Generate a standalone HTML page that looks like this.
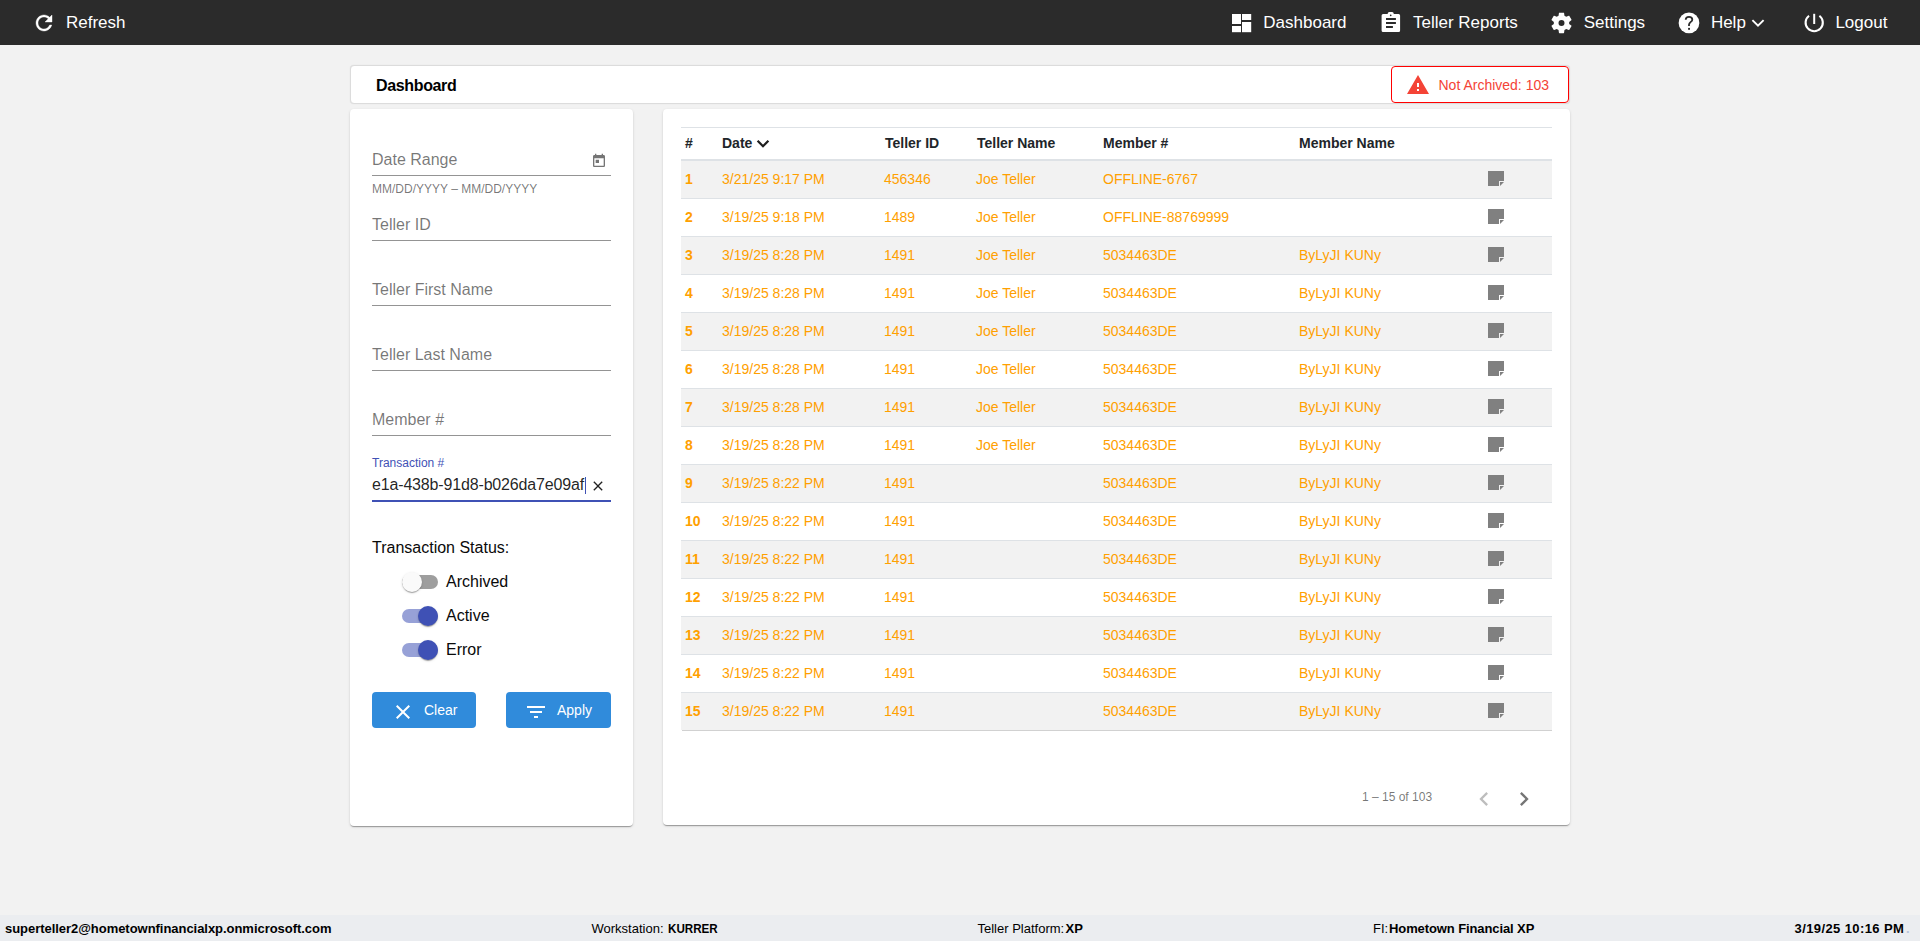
<!DOCTYPE html>
<html><head><meta charset="utf-8"><title>Dashboard</title>
<style>
html,body{margin:0;padding:0;width:1920px;height:941px;overflow:hidden;background:#f2f2f2;font-family:'Liberation Sans', sans-serif}
svg{display:block}
</style></head><body>
<div style="position:absolute;left:0;top:0;width:1920px;height:45px;background:#2b2b2b"></div>
<svg style="position:absolute;left:0;top:0" width="1920" height="45" viewBox="0 0 1920 45"><g transform="translate(32 11)"><path fill="#fff" stroke="#fff" stroke-width="0.4" d="M17.65 6.35C16.2 4.9 14.21 4 12 4c-4.42 0-7.99 3.58-7.99 8s3.57 8 7.99 8c3.73 0 6.84-2.55 7.73-6h-2.08c-.82 2.33-3.04 4-5.65 4-3.31 0-6-2.69-6-6s2.69-6 6-6c1.66 0 3.14.69 4.22 1.78L13 11h7V4l-2.35 2.35z"/></g><g fill="#fff"><rect x="1232" y="14" width="9" height="10"/><rect x="1232" y="26" width="9" height="6.2"/><rect x="1242" y="14" width="9.2" height="6"/><rect x="1242" y="22" width="9.2" height="10.2"/></g><path fill="#fff" d="M1383.1 14H1387.7V13.5A1.6 1.6 0 0 1 1389.3 11.9H1392.1A1.6 1.6 0 0 1 1393.7 13.5V14H1398.6A1.5 1.5 0 0 1 1400.1 15.5V30.5A1.5 1.5 0 0 1 1398.6 32H1383.1A1.5 1.5 0 0 1 1381.6 30.5V15.5A1.5 1.5 0 0 1 1383.1 14Z"/><g fill="#2b2b2b"><circle cx="1390.7" cy="15.3" r="0.85"/><rect x="1386" y="18" width="9.9" height="2"/><rect x="1386" y="22" width="9.9" height="2"/><rect x="1386" y="26" width="6.9" height="2"/></g><g transform="translate(1561.5 22.9) scale(1.07) translate(-12 -12)"><path fill="#fff" fill-rule="evenodd" d="M19.14 12.94c.04-.3.06-.61.06-.94 0-.32-.02-.64-.07-.94l2.03-1.58c.18-.14.23-.41.12-.61l-1.92-3.32c-.12-.22-.37-.29-.59-.22l-2.39.96c-.5-.38-1.03-.7-1.62-.94l-.36-2.54c-.04-.24-.24-.41-.48-.41h-3.84c-.24 0-.43.17-.47.41l-.36 2.54c-.59.24-1.13.57-1.62.94l-2.39-.96c-.22-.08-.47 0-.59.22L2.74 8.87c-.12.21-.08.47.12.61l2.03 1.58c-.05.3-.09.63-.09.94s.02.64.07.94l-2.03 1.58c-.18.14-.23.41-.12.61l1.92 3.32c.12.22.37.29.59.22l2.39-.96c.5.38 1.03.7 1.62.94l.36 2.54c.05.24.24.41.48.41h3.84c.24 0 .44-.17.47-.41l.36-2.54c.59-.24 1.13-.56 1.62-.94l2.39.96c.22.08.47 0 .59-.22l1.92-3.32c.12-.22.07-.47-.12-.61l-2.01-1.58zM12 14.8a2.8 2.8 0 1 1 0-5.6a2.8 2.8 0 1 1 0 5.6z"/></g><circle cx="1689" cy="22.9" r="10.35" fill="#fff"/><path fill="none" stroke="#2b2b2b" stroke-width="1.8" d="M1685.7 19.8C1685.7 17.9 1687.2 16.9 1689 16.9C1690.9 16.9 1692.3 18 1692.3 19.7C1692.3 21.7 1689 22.2 1689 24.7V25.9"/><rect x="1688.1" y="27.9" width="1.9" height="1.9" fill="#2b2b2b"/><path fill="none" stroke="#fff" stroke-width="1.9" d="M1752.4 20.1L1758 25.7L1763.6 20.1"/><path fill="none" stroke="#fff" stroke-width="2.1" d="M1809.02 15.73A8.6 8.6 0 1 0 1819.38 15.73"/><rect x="1813.2" y="13.8" width="2" height="10.2" fill="#fff"/></svg>
<div style="position:absolute;left:66px;top:13.00px;font-size:17px;line-height:19.533px;color:#fff;font-weight:400;white-space:nowrap;font-family:'Liberation Sans', sans-serif">Refresh</div>
<div style="position:absolute;left:1263.3px;top:13.00px;font-size:17px;line-height:19.533px;color:#fff;font-weight:400;white-space:nowrap;font-family:'Liberation Sans', sans-serif">Dashboard</div>
<div style="position:absolute;left:1413px;top:13.00px;font-size:17px;line-height:19.533px;color:#fff;font-weight:400;white-space:nowrap;font-family:'Liberation Sans', sans-serif">Teller Reports</div>
<div style="position:absolute;left:1583.7px;top:13.00px;font-size:17px;line-height:19.533px;color:#fff;font-weight:400;white-space:nowrap;font-family:'Liberation Sans', sans-serif">Settings</div>
<div style="position:absolute;left:1710.9px;top:13.00px;font-size:17px;line-height:19.533px;color:#fff;font-weight:400;white-space:nowrap;font-family:'Liberation Sans', sans-serif">Help</div>
<div style="position:absolute;left:1835.4px;top:13.00px;font-size:17px;line-height:19.533px;color:#fff;font-weight:400;white-space:nowrap;font-family:'Liberation Sans', sans-serif">Logout</div>
<div style="position:absolute;left:350px;top:65px;width:1220px;height:39px;background:#fff;border:1px solid #dcdcdc;border-radius:4px;box-sizing:border-box;box-shadow:0 0 1px rgba(0,0,0,.12)"></div>
<div style="position:absolute;left:376px;top:77.00px;font-size:16px;line-height:18.384px;color:#000;font-weight:700;white-space:nowrap;font-family:'Liberation Sans', sans-serif;letter-spacing:-0.35px">Dashboard</div>
<div style="position:absolute;left:1391px;top:66px;width:178px;height:37px;background:#fff;border:1px solid #f00;border-radius:4px;box-sizing:border-box"></div>
<svg style="position:absolute;left:1406.1px;top:72.8px;width:24px;height:24px" viewBox="0 0 24 24"><path fill="#f44336" d="M1 21h22L12 2 1 21zm12-3h-2v-2h2v2zm0-4h-2v-4h2v4z"/></svg>
<div style="position:absolute;left:1438.5px;top:77.00px;font-size:14px;line-height:16.086px;color:#f44336;font-weight:400;white-space:nowrap;font-family:'Liberation Sans', sans-serif">Not Archived: 103</div>
<div style="position:absolute;left:350px;top:109px;width:283px;height:717px;background:#fff;border-radius:4px;box-shadow:0 2px 1px -1px rgba(0,0,0,.2),0 1px 1px 0 rgba(0,0,0,.14),0 1px 3px 0 rgba(0,0,0,.12)"></div>
<div style="position:absolute;left:372px;top:150.80px;font-size:16px;line-height:18.384px;color:rgba(0,0,0,.54);font-weight:400;white-space:nowrap;font-family:'Liberation Sans', sans-serif">Date Range</div>
<div style="position:absolute;left:372px;top:175px;width:239px;height:1px;background:rgba(0,0,0,.42)"></div>
<div style="position:absolute;left:372px;top:215.80px;font-size:16px;line-height:18.384px;color:rgba(0,0,0,.54);font-weight:400;white-space:nowrap;font-family:'Liberation Sans', sans-serif">Teller ID</div>
<div style="position:absolute;left:372px;top:240px;width:239px;height:1px;background:rgba(0,0,0,.42)"></div>
<div style="position:absolute;left:372px;top:280.80px;font-size:16px;line-height:18.384px;color:rgba(0,0,0,.54);font-weight:400;white-space:nowrap;font-family:'Liberation Sans', sans-serif">Teller First Name</div>
<div style="position:absolute;left:372px;top:305px;width:239px;height:1px;background:rgba(0,0,0,.42)"></div>
<div style="position:absolute;left:372px;top:345.80px;font-size:16px;line-height:18.384px;color:rgba(0,0,0,.54);font-weight:400;white-space:nowrap;font-family:'Liberation Sans', sans-serif">Teller Last Name</div>
<div style="position:absolute;left:372px;top:370px;width:239px;height:1px;background:rgba(0,0,0,.42)"></div>
<div style="position:absolute;left:372px;top:410.80px;font-size:16px;line-height:18.384px;color:rgba(0,0,0,.54);font-weight:400;white-space:nowrap;font-family:'Liberation Sans', sans-serif">Member #</div>
<div style="position:absolute;left:372px;top:435px;width:239px;height:1px;background:rgba(0,0,0,.42)"></div>
<svg style="position:absolute;left:590.9px;top:152.8px;width:16px;height:16px" viewBox="0 0 24 24"><path fill="rgba(0,0,0,.54)" d="M19 3h-1V1h-2v2H8V1H6v2H5c-1.11 0-1.99.9-1.99 2L3 19c0 1.1.89 2 2 2h14c1.1 0 2-.9 2-2V5c0-1.1-.9-2-2-2zm0 16H5V8h14v11zM7 10h5v5H7z"/></svg>
<div style="position:absolute;left:372px;top:182.80px;font-size:12px;line-height:13.788px;color:rgba(0,0,0,.54);font-weight:400;white-space:nowrap;font-family:'Liberation Sans', sans-serif">MM/DD/YYYY – MM/DD/YYYY</div>
<div style="position:absolute;left:372px;top:456.60px;font-size:12px;line-height:13.788px;color:#3f51b5;font-weight:400;white-space:nowrap;font-family:'Liberation Sans', sans-serif">Transaction #</div>
<div style="position:absolute;left:372px;top:476.00px;font-size:16px;line-height:18.384px;color:rgba(0,0,0,.87);font-weight:400;white-space:nowrap;font-family:'Liberation Sans', sans-serif;letter-spacing:-0.16px">e1a-438b-91d8-b026da7e09af</div>
<div style="position:absolute;left:585px;top:477px;width:1px;height:17px;background:#3f51b5"></div>
<svg style="position:absolute;left:589.8px;top:477.5px;width:16px;height:16px" viewBox="0 0 24 24"><path fill="rgba(0,0,0,.87)" d="M19 6.41L17.59 5 12 10.59 6.41 5 5 6.41 10.59 12 5 17.59 6.41 19 12 13.41 17.59 19 19 17.59 13.41 12z"/></svg>
<div style="position:absolute;left:372px;top:500px;width:239px;height:2px;background:#3f51b5"></div>
<div style="position:absolute;left:372px;top:539.00px;font-size:16px;line-height:18.384px;color:#0a0a0a;font-weight:400;white-space:nowrap;font-family:'Liberation Sans', sans-serif">Transaction Status:</div>
<div style="position:absolute;left:402px;top:575px;width:36px;height:14px;border-radius:7px;background:rgba(0,0,0,.38)"></div>
<div style="position:absolute;left:402px;top:572px;width:20px;height:20px;border-radius:50%;background:#fafafa;box-shadow:0 2px 1px -1px rgba(0,0,0,.2),0 1px 1px 0 rgba(0,0,0,.14),0 1px 3px 0 rgba(0,0,0,.12)"></div>
<div style="position:absolute;left:446px;top:572.50px;font-size:16px;line-height:18.384px;color:#0a0a0a;font-weight:400;white-space:nowrap;font-family:'Liberation Sans', sans-serif">Archived</div>
<div style="position:absolute;left:402px;top:609px;width:36px;height:14px;border-radius:7px;background:rgba(63,81,181,.54)"></div>
<div style="position:absolute;left:418px;top:606px;width:20px;height:20px;border-radius:50%;background:#3f51b5;box-shadow:0 2px 1px -1px rgba(0,0,0,.2),0 1px 1px 0 rgba(0,0,0,.14),0 1px 3px 0 rgba(0,0,0,.12)"></div>
<div style="position:absolute;left:446px;top:606.50px;font-size:16px;line-height:18.384px;color:#0a0a0a;font-weight:400;white-space:nowrap;font-family:'Liberation Sans', sans-serif">Active</div>
<div style="position:absolute;left:402px;top:643px;width:36px;height:14px;border-radius:7px;background:rgba(63,81,181,.54)"></div>
<div style="position:absolute;left:418px;top:640px;width:20px;height:20px;border-radius:50%;background:#3f51b5;box-shadow:0 2px 1px -1px rgba(0,0,0,.2),0 1px 1px 0 rgba(0,0,0,.14),0 1px 3px 0 rgba(0,0,0,.12)"></div>
<div style="position:absolute;left:446px;top:640.50px;font-size:16px;line-height:18.384px;color:#0a0a0a;font-weight:400;white-space:nowrap;font-family:'Liberation Sans', sans-serif">Error</div>
<div style="position:absolute;left:372px;top:692px;width:104px;height:36px;background:#308bdb;border-radius:4px"></div>
<svg style="position:absolute;left:390.5px;top:700px;width:24px;height:24px" viewBox="0 0 24 24"><path fill="#fff" d="M19 6.41L17.59 5 12 10.59 6.41 5 5 6.41 10.59 12 5 17.59 6.41 19 12 13.41 17.59 19 19 17.59 13.41 12z"/></svg>
<div style="position:absolute;left:424px;top:702.00px;font-size:14px;line-height:16.086px;color:#fff;font-weight:400;white-space:nowrap;font-family:'Liberation Sans', sans-serif">Clear</div>
<div style="position:absolute;left:506px;top:692px;width:105px;height:36px;background:#308bdb;border-radius:4px"></div>
<svg style="position:absolute;left:523.5px;top:700px;width:24px;height:24px" viewBox="0 0 24 24"><path fill="#fff" d="M10 18h4v-2h-4v2zM3 6v2h18V6H3zm3 7h12v-2H6v2z"/></svg>
<div style="position:absolute;left:557px;top:702.00px;font-size:14px;line-height:16.086px;color:#fff;font-weight:400;white-space:nowrap;font-family:'Liberation Sans', sans-serif">Apply</div>
<div style="position:absolute;left:663px;top:109px;width:907px;height:716px;background:#fff;border-radius:4px;box-shadow:0 2px 1px -1px rgba(0,0,0,.2),0 1px 1px 0 rgba(0,0,0,.14),0 1px 3px 0 rgba(0,0,0,.12)"></div>
<div style="position:absolute;left:681px;top:127px;width:871px;height:1px;background:#dee2e6"></div>
<div style="position:absolute;left:681px;top:159px;width:871px;height:2px;background:#dee2e6"></div>
<div style="position:absolute;left:685px;top:135.00px;font-size:14px;line-height:16.086px;color:#212529;font-weight:700;white-space:nowrap;font-family:'Liberation Sans', sans-serif">#</div>
<div style="position:absolute;left:722px;top:135.00px;font-size:14px;line-height:16.086px;color:#212529;font-weight:700;white-space:nowrap;font-family:'Liberation Sans', sans-serif">Date</div>
<div style="position:absolute;left:885px;top:135.00px;font-size:14px;line-height:16.086px;color:#212529;font-weight:700;white-space:nowrap;font-family:'Liberation Sans', sans-serif">Teller ID</div>
<div style="position:absolute;left:977px;top:135.00px;font-size:14px;line-height:16.086px;color:#212529;font-weight:700;white-space:nowrap;font-family:'Liberation Sans', sans-serif">Teller Name</div>
<div style="position:absolute;left:1103px;top:135.00px;font-size:14px;line-height:16.086px;color:#212529;font-weight:700;white-space:nowrap;font-family:'Liberation Sans', sans-serif">Member #</div>
<div style="position:absolute;left:1299px;top:135.00px;font-size:14px;line-height:16.086px;color:#212529;font-weight:700;white-space:nowrap;font-family:'Liberation Sans', sans-serif">Member Name</div>
<svg style="position:absolute;left:750px;top:132px;width:26px;height:22px" viewBox="750 132 26 22"><path fill="none" stroke="#1e1e1e" stroke-width="2.3" d="M757.6 140.8L763 146.2L768.4 140.8"/></svg>
<div style="position:absolute;left:681px;top:161px;width:871px;height:37px;background:#f2f2f2"></div>
<div style="position:absolute;left:681px;top:198px;width:871px;height:1px;background:#dee2e6"></div>
<div style="position:absolute;left:685px;top:171.00px;font-size:14px;line-height:16.086px;color:#ffa000;font-weight:700;white-space:nowrap;font-family:'Liberation Sans', sans-serif">1</div>
<div style="position:absolute;left:722px;top:171.00px;font-size:14px;line-height:16.086px;color:#ffa000;font-weight:400;white-space:nowrap;font-family:'Liberation Sans', sans-serif">3/21/25 9:17 PM</div>
<div style="position:absolute;left:884px;top:171.00px;font-size:14px;line-height:16.086px;color:#ffa000;font-weight:400;white-space:nowrap;font-family:'Liberation Sans', sans-serif">456346</div>
<div style="position:absolute;left:976px;top:171.00px;font-size:14px;line-height:16.086px;color:#ffa000;font-weight:400;white-space:nowrap;font-family:'Liberation Sans', sans-serif">Joe Teller</div>
<div style="position:absolute;left:1103px;top:171.00px;font-size:14px;line-height:16.086px;color:#ffa000;font-weight:400;white-space:nowrap;font-family:'Liberation Sans', sans-serif">OFFLINE-6767</div>
<svg style="position:absolute;left:1488px;top:171px;width:16px;height:15px" viewBox="0 0 16 15"><path fill="#808080" d="M0 0H16V10H11V15H0Z M12 11H16L12 15Z"/></svg>
<div style="position:absolute;left:681px;top:199px;width:871px;height:37px;background:#fff"></div>
<div style="position:absolute;left:681px;top:236px;width:871px;height:1px;background:#dee2e6"></div>
<div style="position:absolute;left:685px;top:209.00px;font-size:14px;line-height:16.086px;color:#ffa000;font-weight:700;white-space:nowrap;font-family:'Liberation Sans', sans-serif">2</div>
<div style="position:absolute;left:722px;top:209.00px;font-size:14px;line-height:16.086px;color:#ffa000;font-weight:400;white-space:nowrap;font-family:'Liberation Sans', sans-serif">3/19/25 9:18 PM</div>
<div style="position:absolute;left:884px;top:209.00px;font-size:14px;line-height:16.086px;color:#ffa000;font-weight:400;white-space:nowrap;font-family:'Liberation Sans', sans-serif">1489</div>
<div style="position:absolute;left:976px;top:209.00px;font-size:14px;line-height:16.086px;color:#ffa000;font-weight:400;white-space:nowrap;font-family:'Liberation Sans', sans-serif">Joe Teller</div>
<div style="position:absolute;left:1103px;top:209.00px;font-size:14px;line-height:16.086px;color:#ffa000;font-weight:400;white-space:nowrap;font-family:'Liberation Sans', sans-serif">OFFLINE-88769999</div>
<svg style="position:absolute;left:1488px;top:209px;width:16px;height:15px" viewBox="0 0 16 15"><path fill="#808080" d="M0 0H16V10H11V15H0Z M12 11H16L12 15Z"/></svg>
<div style="position:absolute;left:681px;top:237px;width:871px;height:37px;background:#f2f2f2"></div>
<div style="position:absolute;left:681px;top:274px;width:871px;height:1px;background:#dee2e6"></div>
<div style="position:absolute;left:685px;top:247.00px;font-size:14px;line-height:16.086px;color:#ffa000;font-weight:700;white-space:nowrap;font-family:'Liberation Sans', sans-serif">3</div>
<div style="position:absolute;left:722px;top:247.00px;font-size:14px;line-height:16.086px;color:#ffa000;font-weight:400;white-space:nowrap;font-family:'Liberation Sans', sans-serif">3/19/25 8:28 PM</div>
<div style="position:absolute;left:884px;top:247.00px;font-size:14px;line-height:16.086px;color:#ffa000;font-weight:400;white-space:nowrap;font-family:'Liberation Sans', sans-serif">1491</div>
<div style="position:absolute;left:976px;top:247.00px;font-size:14px;line-height:16.086px;color:#ffa000;font-weight:400;white-space:nowrap;font-family:'Liberation Sans', sans-serif">Joe Teller</div>
<div style="position:absolute;left:1103px;top:247.00px;font-size:14px;line-height:16.086px;color:#ffa000;font-weight:400;white-space:nowrap;font-family:'Liberation Sans', sans-serif">5034463DE</div>
<div style="position:absolute;left:1299px;top:247.00px;font-size:14px;line-height:16.086px;color:#ffa000;font-weight:400;white-space:nowrap;font-family:'Liberation Sans', sans-serif">ByLyJI KUNy</div>
<svg style="position:absolute;left:1488px;top:247px;width:16px;height:15px" viewBox="0 0 16 15"><path fill="#808080" d="M0 0H16V10H11V15H0Z M12 11H16L12 15Z"/></svg>
<div style="position:absolute;left:681px;top:275px;width:871px;height:37px;background:#fff"></div>
<div style="position:absolute;left:681px;top:312px;width:871px;height:1px;background:#dee2e6"></div>
<div style="position:absolute;left:685px;top:285.00px;font-size:14px;line-height:16.086px;color:#ffa000;font-weight:700;white-space:nowrap;font-family:'Liberation Sans', sans-serif">4</div>
<div style="position:absolute;left:722px;top:285.00px;font-size:14px;line-height:16.086px;color:#ffa000;font-weight:400;white-space:nowrap;font-family:'Liberation Sans', sans-serif">3/19/25 8:28 PM</div>
<div style="position:absolute;left:884px;top:285.00px;font-size:14px;line-height:16.086px;color:#ffa000;font-weight:400;white-space:nowrap;font-family:'Liberation Sans', sans-serif">1491</div>
<div style="position:absolute;left:976px;top:285.00px;font-size:14px;line-height:16.086px;color:#ffa000;font-weight:400;white-space:nowrap;font-family:'Liberation Sans', sans-serif">Joe Teller</div>
<div style="position:absolute;left:1103px;top:285.00px;font-size:14px;line-height:16.086px;color:#ffa000;font-weight:400;white-space:nowrap;font-family:'Liberation Sans', sans-serif">5034463DE</div>
<div style="position:absolute;left:1299px;top:285.00px;font-size:14px;line-height:16.086px;color:#ffa000;font-weight:400;white-space:nowrap;font-family:'Liberation Sans', sans-serif">ByLyJI KUNy</div>
<svg style="position:absolute;left:1488px;top:285px;width:16px;height:15px" viewBox="0 0 16 15"><path fill="#808080" d="M0 0H16V10H11V15H0Z M12 11H16L12 15Z"/></svg>
<div style="position:absolute;left:681px;top:313px;width:871px;height:37px;background:#f2f2f2"></div>
<div style="position:absolute;left:681px;top:350px;width:871px;height:1px;background:#dee2e6"></div>
<div style="position:absolute;left:685px;top:323.00px;font-size:14px;line-height:16.086px;color:#ffa000;font-weight:700;white-space:nowrap;font-family:'Liberation Sans', sans-serif">5</div>
<div style="position:absolute;left:722px;top:323.00px;font-size:14px;line-height:16.086px;color:#ffa000;font-weight:400;white-space:nowrap;font-family:'Liberation Sans', sans-serif">3/19/25 8:28 PM</div>
<div style="position:absolute;left:884px;top:323.00px;font-size:14px;line-height:16.086px;color:#ffa000;font-weight:400;white-space:nowrap;font-family:'Liberation Sans', sans-serif">1491</div>
<div style="position:absolute;left:976px;top:323.00px;font-size:14px;line-height:16.086px;color:#ffa000;font-weight:400;white-space:nowrap;font-family:'Liberation Sans', sans-serif">Joe Teller</div>
<div style="position:absolute;left:1103px;top:323.00px;font-size:14px;line-height:16.086px;color:#ffa000;font-weight:400;white-space:nowrap;font-family:'Liberation Sans', sans-serif">5034463DE</div>
<div style="position:absolute;left:1299px;top:323.00px;font-size:14px;line-height:16.086px;color:#ffa000;font-weight:400;white-space:nowrap;font-family:'Liberation Sans', sans-serif">ByLyJI KUNy</div>
<svg style="position:absolute;left:1488px;top:323px;width:16px;height:15px" viewBox="0 0 16 15"><path fill="#808080" d="M0 0H16V10H11V15H0Z M12 11H16L12 15Z"/></svg>
<div style="position:absolute;left:681px;top:351px;width:871px;height:37px;background:#fff"></div>
<div style="position:absolute;left:681px;top:388px;width:871px;height:1px;background:#dee2e6"></div>
<div style="position:absolute;left:685px;top:361.00px;font-size:14px;line-height:16.086px;color:#ffa000;font-weight:700;white-space:nowrap;font-family:'Liberation Sans', sans-serif">6</div>
<div style="position:absolute;left:722px;top:361.00px;font-size:14px;line-height:16.086px;color:#ffa000;font-weight:400;white-space:nowrap;font-family:'Liberation Sans', sans-serif">3/19/25 8:28 PM</div>
<div style="position:absolute;left:884px;top:361.00px;font-size:14px;line-height:16.086px;color:#ffa000;font-weight:400;white-space:nowrap;font-family:'Liberation Sans', sans-serif">1491</div>
<div style="position:absolute;left:976px;top:361.00px;font-size:14px;line-height:16.086px;color:#ffa000;font-weight:400;white-space:nowrap;font-family:'Liberation Sans', sans-serif">Joe Teller</div>
<div style="position:absolute;left:1103px;top:361.00px;font-size:14px;line-height:16.086px;color:#ffa000;font-weight:400;white-space:nowrap;font-family:'Liberation Sans', sans-serif">5034463DE</div>
<div style="position:absolute;left:1299px;top:361.00px;font-size:14px;line-height:16.086px;color:#ffa000;font-weight:400;white-space:nowrap;font-family:'Liberation Sans', sans-serif">ByLyJI KUNy</div>
<svg style="position:absolute;left:1488px;top:361px;width:16px;height:15px" viewBox="0 0 16 15"><path fill="#808080" d="M0 0H16V10H11V15H0Z M12 11H16L12 15Z"/></svg>
<div style="position:absolute;left:681px;top:389px;width:871px;height:37px;background:#f2f2f2"></div>
<div style="position:absolute;left:681px;top:426px;width:871px;height:1px;background:#dee2e6"></div>
<div style="position:absolute;left:685px;top:399.00px;font-size:14px;line-height:16.086px;color:#ffa000;font-weight:700;white-space:nowrap;font-family:'Liberation Sans', sans-serif">7</div>
<div style="position:absolute;left:722px;top:399.00px;font-size:14px;line-height:16.086px;color:#ffa000;font-weight:400;white-space:nowrap;font-family:'Liberation Sans', sans-serif">3/19/25 8:28 PM</div>
<div style="position:absolute;left:884px;top:399.00px;font-size:14px;line-height:16.086px;color:#ffa000;font-weight:400;white-space:nowrap;font-family:'Liberation Sans', sans-serif">1491</div>
<div style="position:absolute;left:976px;top:399.00px;font-size:14px;line-height:16.086px;color:#ffa000;font-weight:400;white-space:nowrap;font-family:'Liberation Sans', sans-serif">Joe Teller</div>
<div style="position:absolute;left:1103px;top:399.00px;font-size:14px;line-height:16.086px;color:#ffa000;font-weight:400;white-space:nowrap;font-family:'Liberation Sans', sans-serif">5034463DE</div>
<div style="position:absolute;left:1299px;top:399.00px;font-size:14px;line-height:16.086px;color:#ffa000;font-weight:400;white-space:nowrap;font-family:'Liberation Sans', sans-serif">ByLyJI KUNy</div>
<svg style="position:absolute;left:1488px;top:399px;width:16px;height:15px" viewBox="0 0 16 15"><path fill="#808080" d="M0 0H16V10H11V15H0Z M12 11H16L12 15Z"/></svg>
<div style="position:absolute;left:681px;top:427px;width:871px;height:37px;background:#fff"></div>
<div style="position:absolute;left:681px;top:464px;width:871px;height:1px;background:#dee2e6"></div>
<div style="position:absolute;left:685px;top:437.00px;font-size:14px;line-height:16.086px;color:#ffa000;font-weight:700;white-space:nowrap;font-family:'Liberation Sans', sans-serif">8</div>
<div style="position:absolute;left:722px;top:437.00px;font-size:14px;line-height:16.086px;color:#ffa000;font-weight:400;white-space:nowrap;font-family:'Liberation Sans', sans-serif">3/19/25 8:28 PM</div>
<div style="position:absolute;left:884px;top:437.00px;font-size:14px;line-height:16.086px;color:#ffa000;font-weight:400;white-space:nowrap;font-family:'Liberation Sans', sans-serif">1491</div>
<div style="position:absolute;left:976px;top:437.00px;font-size:14px;line-height:16.086px;color:#ffa000;font-weight:400;white-space:nowrap;font-family:'Liberation Sans', sans-serif">Joe Teller</div>
<div style="position:absolute;left:1103px;top:437.00px;font-size:14px;line-height:16.086px;color:#ffa000;font-weight:400;white-space:nowrap;font-family:'Liberation Sans', sans-serif">5034463DE</div>
<div style="position:absolute;left:1299px;top:437.00px;font-size:14px;line-height:16.086px;color:#ffa000;font-weight:400;white-space:nowrap;font-family:'Liberation Sans', sans-serif">ByLyJI KUNy</div>
<svg style="position:absolute;left:1488px;top:437px;width:16px;height:15px" viewBox="0 0 16 15"><path fill="#808080" d="M0 0H16V10H11V15H0Z M12 11H16L12 15Z"/></svg>
<div style="position:absolute;left:681px;top:465px;width:871px;height:37px;background:#f2f2f2"></div>
<div style="position:absolute;left:681px;top:502px;width:871px;height:1px;background:#dee2e6"></div>
<div style="position:absolute;left:685px;top:475.00px;font-size:14px;line-height:16.086px;color:#ffa000;font-weight:700;white-space:nowrap;font-family:'Liberation Sans', sans-serif">9</div>
<div style="position:absolute;left:722px;top:475.00px;font-size:14px;line-height:16.086px;color:#ffa000;font-weight:400;white-space:nowrap;font-family:'Liberation Sans', sans-serif">3/19/25 8:22 PM</div>
<div style="position:absolute;left:884px;top:475.00px;font-size:14px;line-height:16.086px;color:#ffa000;font-weight:400;white-space:nowrap;font-family:'Liberation Sans', sans-serif">1491</div>
<div style="position:absolute;left:1103px;top:475.00px;font-size:14px;line-height:16.086px;color:#ffa000;font-weight:400;white-space:nowrap;font-family:'Liberation Sans', sans-serif">5034463DE</div>
<div style="position:absolute;left:1299px;top:475.00px;font-size:14px;line-height:16.086px;color:#ffa000;font-weight:400;white-space:nowrap;font-family:'Liberation Sans', sans-serif">ByLyJI KUNy</div>
<svg style="position:absolute;left:1488px;top:475px;width:16px;height:15px" viewBox="0 0 16 15"><path fill="#808080" d="M0 0H16V10H11V15H0Z M12 11H16L12 15Z"/></svg>
<div style="position:absolute;left:681px;top:503px;width:871px;height:37px;background:#fff"></div>
<div style="position:absolute;left:681px;top:540px;width:871px;height:1px;background:#dee2e6"></div>
<div style="position:absolute;left:685px;top:513.00px;font-size:14px;line-height:16.086px;color:#ffa000;font-weight:700;white-space:nowrap;font-family:'Liberation Sans', sans-serif">10</div>
<div style="position:absolute;left:722px;top:513.00px;font-size:14px;line-height:16.086px;color:#ffa000;font-weight:400;white-space:nowrap;font-family:'Liberation Sans', sans-serif">3/19/25 8:22 PM</div>
<div style="position:absolute;left:884px;top:513.00px;font-size:14px;line-height:16.086px;color:#ffa000;font-weight:400;white-space:nowrap;font-family:'Liberation Sans', sans-serif">1491</div>
<div style="position:absolute;left:1103px;top:513.00px;font-size:14px;line-height:16.086px;color:#ffa000;font-weight:400;white-space:nowrap;font-family:'Liberation Sans', sans-serif">5034463DE</div>
<div style="position:absolute;left:1299px;top:513.00px;font-size:14px;line-height:16.086px;color:#ffa000;font-weight:400;white-space:nowrap;font-family:'Liberation Sans', sans-serif">ByLyJI KUNy</div>
<svg style="position:absolute;left:1488px;top:513px;width:16px;height:15px" viewBox="0 0 16 15"><path fill="#808080" d="M0 0H16V10H11V15H0Z M12 11H16L12 15Z"/></svg>
<div style="position:absolute;left:681px;top:541px;width:871px;height:37px;background:#f2f2f2"></div>
<div style="position:absolute;left:681px;top:578px;width:871px;height:1px;background:#dee2e6"></div>
<div style="position:absolute;left:685px;top:551.00px;font-size:14px;line-height:16.086px;color:#ffa000;font-weight:700;white-space:nowrap;font-family:'Liberation Sans', sans-serif">11</div>
<div style="position:absolute;left:722px;top:551.00px;font-size:14px;line-height:16.086px;color:#ffa000;font-weight:400;white-space:nowrap;font-family:'Liberation Sans', sans-serif">3/19/25 8:22 PM</div>
<div style="position:absolute;left:884px;top:551.00px;font-size:14px;line-height:16.086px;color:#ffa000;font-weight:400;white-space:nowrap;font-family:'Liberation Sans', sans-serif">1491</div>
<div style="position:absolute;left:1103px;top:551.00px;font-size:14px;line-height:16.086px;color:#ffa000;font-weight:400;white-space:nowrap;font-family:'Liberation Sans', sans-serif">5034463DE</div>
<div style="position:absolute;left:1299px;top:551.00px;font-size:14px;line-height:16.086px;color:#ffa000;font-weight:400;white-space:nowrap;font-family:'Liberation Sans', sans-serif">ByLyJI KUNy</div>
<svg style="position:absolute;left:1488px;top:551px;width:16px;height:15px" viewBox="0 0 16 15"><path fill="#808080" d="M0 0H16V10H11V15H0Z M12 11H16L12 15Z"/></svg>
<div style="position:absolute;left:681px;top:579px;width:871px;height:37px;background:#fff"></div>
<div style="position:absolute;left:681px;top:616px;width:871px;height:1px;background:#dee2e6"></div>
<div style="position:absolute;left:685px;top:589.00px;font-size:14px;line-height:16.086px;color:#ffa000;font-weight:700;white-space:nowrap;font-family:'Liberation Sans', sans-serif">12</div>
<div style="position:absolute;left:722px;top:589.00px;font-size:14px;line-height:16.086px;color:#ffa000;font-weight:400;white-space:nowrap;font-family:'Liberation Sans', sans-serif">3/19/25 8:22 PM</div>
<div style="position:absolute;left:884px;top:589.00px;font-size:14px;line-height:16.086px;color:#ffa000;font-weight:400;white-space:nowrap;font-family:'Liberation Sans', sans-serif">1491</div>
<div style="position:absolute;left:1103px;top:589.00px;font-size:14px;line-height:16.086px;color:#ffa000;font-weight:400;white-space:nowrap;font-family:'Liberation Sans', sans-serif">5034463DE</div>
<div style="position:absolute;left:1299px;top:589.00px;font-size:14px;line-height:16.086px;color:#ffa000;font-weight:400;white-space:nowrap;font-family:'Liberation Sans', sans-serif">ByLyJI KUNy</div>
<svg style="position:absolute;left:1488px;top:589px;width:16px;height:15px" viewBox="0 0 16 15"><path fill="#808080" d="M0 0H16V10H11V15H0Z M12 11H16L12 15Z"/></svg>
<div style="position:absolute;left:681px;top:617px;width:871px;height:37px;background:#f2f2f2"></div>
<div style="position:absolute;left:681px;top:654px;width:871px;height:1px;background:#dee2e6"></div>
<div style="position:absolute;left:685px;top:627.00px;font-size:14px;line-height:16.086px;color:#ffa000;font-weight:700;white-space:nowrap;font-family:'Liberation Sans', sans-serif">13</div>
<div style="position:absolute;left:722px;top:627.00px;font-size:14px;line-height:16.086px;color:#ffa000;font-weight:400;white-space:nowrap;font-family:'Liberation Sans', sans-serif">3/19/25 8:22 PM</div>
<div style="position:absolute;left:884px;top:627.00px;font-size:14px;line-height:16.086px;color:#ffa000;font-weight:400;white-space:nowrap;font-family:'Liberation Sans', sans-serif">1491</div>
<div style="position:absolute;left:1103px;top:627.00px;font-size:14px;line-height:16.086px;color:#ffa000;font-weight:400;white-space:nowrap;font-family:'Liberation Sans', sans-serif">5034463DE</div>
<div style="position:absolute;left:1299px;top:627.00px;font-size:14px;line-height:16.086px;color:#ffa000;font-weight:400;white-space:nowrap;font-family:'Liberation Sans', sans-serif">ByLyJI KUNy</div>
<svg style="position:absolute;left:1488px;top:627px;width:16px;height:15px" viewBox="0 0 16 15"><path fill="#808080" d="M0 0H16V10H11V15H0Z M12 11H16L12 15Z"/></svg>
<div style="position:absolute;left:681px;top:655px;width:871px;height:37px;background:#fff"></div>
<div style="position:absolute;left:681px;top:692px;width:871px;height:1px;background:#dee2e6"></div>
<div style="position:absolute;left:685px;top:665.00px;font-size:14px;line-height:16.086px;color:#ffa000;font-weight:700;white-space:nowrap;font-family:'Liberation Sans', sans-serif">14</div>
<div style="position:absolute;left:722px;top:665.00px;font-size:14px;line-height:16.086px;color:#ffa000;font-weight:400;white-space:nowrap;font-family:'Liberation Sans', sans-serif">3/19/25 8:22 PM</div>
<div style="position:absolute;left:884px;top:665.00px;font-size:14px;line-height:16.086px;color:#ffa000;font-weight:400;white-space:nowrap;font-family:'Liberation Sans', sans-serif">1491</div>
<div style="position:absolute;left:1103px;top:665.00px;font-size:14px;line-height:16.086px;color:#ffa000;font-weight:400;white-space:nowrap;font-family:'Liberation Sans', sans-serif">5034463DE</div>
<div style="position:absolute;left:1299px;top:665.00px;font-size:14px;line-height:16.086px;color:#ffa000;font-weight:400;white-space:nowrap;font-family:'Liberation Sans', sans-serif">ByLyJI KUNy</div>
<svg style="position:absolute;left:1488px;top:665px;width:16px;height:15px" viewBox="0 0 16 15"><path fill="#808080" d="M0 0H16V10H11V15H0Z M12 11H16L12 15Z"/></svg>
<div style="position:absolute;left:681px;top:693px;width:871px;height:37px;background:#f2f2f2"></div>
<div style="position:absolute;left:682px;top:730px;width:870px;height:1px;background:#d1d1d1"></div>
<div style="position:absolute;left:685px;top:703.00px;font-size:14px;line-height:16.086px;color:#ffa000;font-weight:700;white-space:nowrap;font-family:'Liberation Sans', sans-serif">15</div>
<div style="position:absolute;left:722px;top:703.00px;font-size:14px;line-height:16.086px;color:#ffa000;font-weight:400;white-space:nowrap;font-family:'Liberation Sans', sans-serif">3/19/25 8:22 PM</div>
<div style="position:absolute;left:884px;top:703.00px;font-size:14px;line-height:16.086px;color:#ffa000;font-weight:400;white-space:nowrap;font-family:'Liberation Sans', sans-serif">1491</div>
<div style="position:absolute;left:1103px;top:703.00px;font-size:14px;line-height:16.086px;color:#ffa000;font-weight:400;white-space:nowrap;font-family:'Liberation Sans', sans-serif">5034463DE</div>
<div style="position:absolute;left:1299px;top:703.00px;font-size:14px;line-height:16.086px;color:#ffa000;font-weight:400;white-space:nowrap;font-family:'Liberation Sans', sans-serif">ByLyJI KUNy</div>
<svg style="position:absolute;left:1488px;top:703px;width:16px;height:15px" viewBox="0 0 16 15"><path fill="#808080" d="M0 0H16V10H11V15H0Z M12 11H16L12 15Z"/></svg>
<div style="position:absolute;left:1362px;top:791.00px;font-size:12px;line-height:13.788px;color:rgba(0,0,0,.54);font-weight:400;white-space:nowrap;font-family:'Liberation Sans', sans-serif">1 – 15 of 103</div>
<svg style="position:absolute;left:1470.4px;top:785px;width:28px;height:28px" viewBox="0 0 24 24"><path fill="rgba(0,0,0,.26)" d="M15.41 7.41L14 6l-6 6 6 6 1.41-1.41L10.83 12z"/></svg>
<svg style="position:absolute;left:1510px;top:785px;width:28px;height:28px" viewBox="0 0 24 24"><path fill="rgba(0,0,0,.54)" d="M10 6L8.59 7.41 13.17 12l-4.58 4.59L10 18l6-6z"/></svg>
<div style="position:absolute;left:0;top:915px;width:1920px;height:26px;background:#ebedf0"></div>
<div style="position:absolute;left:5px;top:922.00px;font-size:13px;line-height:14.937px;color:#000;font-weight:700;white-space:nowrap;font-family:'Liberation Sans', sans-serif;letter-spacing:-0.04px">superteller2@hometownfinancialxp.onmicrosoft.com</div>
<div style="position:absolute;left:591.5px;top:922.00px;font-size:13px;line-height:14.937px;color:#000;font-weight:400;white-space:nowrap;font-family:'Liberation Sans', sans-serif">Workstation:</div>
<div style="position:absolute;left:667.5px;top:922.00px;font-size:13px;line-height:14.937px;color:#000;font-weight:700;white-space:nowrap;font-family:'Liberation Sans', sans-serif;transform:scaleX(0.895);transform-origin:0 0">KURRER</div>
<div style="position:absolute;left:977.5px;top:922.00px;font-size:13px;line-height:14.937px;color:#000;font-weight:400;white-space:nowrap;font-family:'Liberation Sans', sans-serif">Teller Platform:</div>
<div style="position:absolute;left:1065.5px;top:922.00px;font-size:13px;line-height:14.937px;color:#000;font-weight:700;white-space:nowrap;font-family:'Liberation Sans', sans-serif">XP</div>
<div style="position:absolute;left:1373px;top:922.00px;font-size:13px;line-height:14.937px;color:#000;font-weight:400;white-space:nowrap;font-family:'Liberation Sans', sans-serif">FI:</div>
<div style="position:absolute;left:1389px;top:922.00px;font-size:13px;line-height:14.937px;color:#000;font-weight:700;white-space:nowrap;font-family:'Liberation Sans', sans-serif;letter-spacing:-0.1px">Hometown Financial XP</div>
<div style="position:absolute;left:1794.5px;top:922.00px;font-size:13px;line-height:14.937px;color:#000;font-weight:700;white-space:nowrap;font-family:'Liberation Sans', sans-serif;letter-spacing:0.4px">3/19/25 10:16 PM</div>
<div style="position:absolute;left:1906px;top:922.00px;font-size:13px;line-height:14.937px;color:#b8c4d8;font-weight:700;white-space:nowrap;font-family:'Liberation Sans', sans-serif">.</div>
</body></html>
